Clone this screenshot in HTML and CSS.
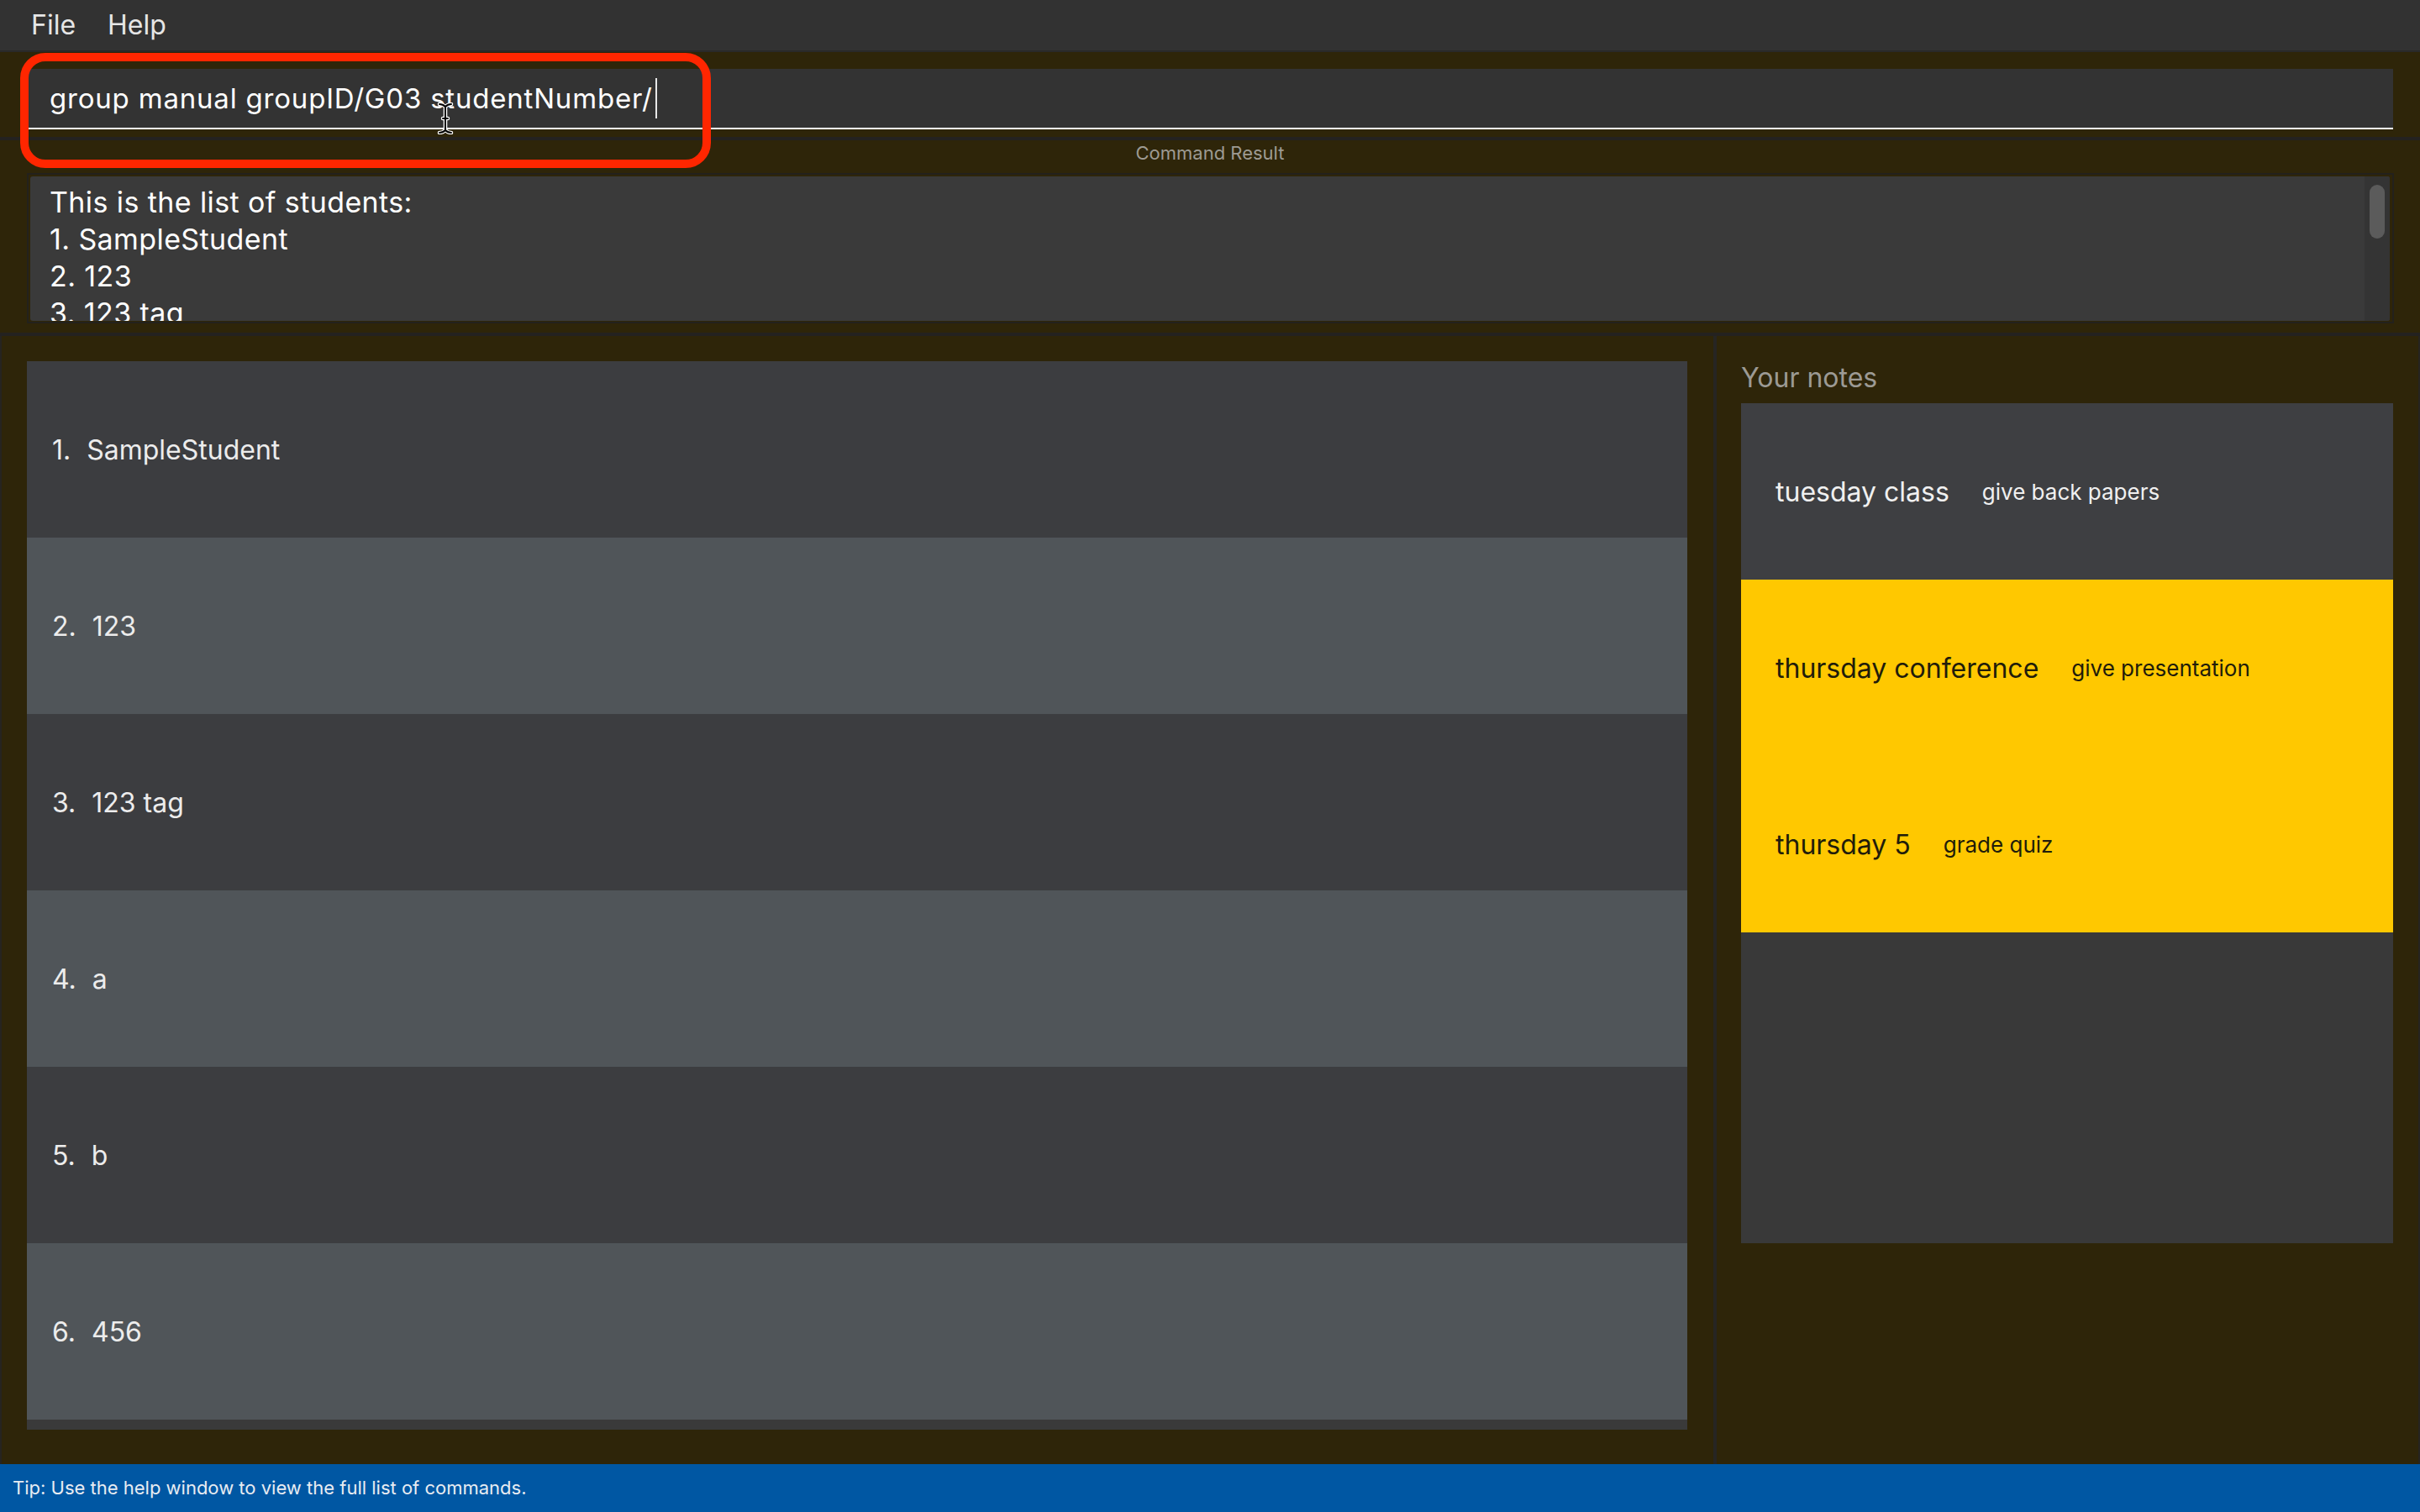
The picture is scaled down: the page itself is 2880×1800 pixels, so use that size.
FILE: index.html
```html
<!DOCTYPE html>
<html lang="en">
<head>
<meta charset="utf-8">
<title>Student manager</title>
<link rel="stylesheet" href="styles.css">
</head>
<body>
<div class="app">
  <div class="menubar">
    <span class="menu-item">File</span>
    <span class="menu-item">Help</span>
  </div>

  <div class="cmd-panel">
    <div class="cmd-field">
      <span class="cmd-text">group manual groupID/G03 studentNumber/</span><span class="caret"></span>
    </div>
  </div>

  <div class="result-panel">
    <div class="result-label">Command Result</div>
    <div class="result-box">
      <div class="result-inner">
        <div class="result-text">
          <div class="result-line">This is the list of students:</div>
          <div class="result-line">1. SampleStudent</div>
          <div class="result-line">2. 123</div>
          <div class="result-line">3. 123 tag</div>
        </div>
        <div class="scroll-track"><div class="scroll-thumb"></div></div>
      </div>
    </div>
  </div>

  <div class="main">
    <div class="list-col">
      <div class="list">
        <div class="row row-dark"><span class="idx">1.</span><span class="name">SampleStudent</span></div>
        <div class="row row-light"><span class="idx">2.</span><span class="name">123</span></div>
        <div class="row row-dark"><span class="idx">3.</span><span class="name">123 tag</span></div>
        <div class="row row-light"><span class="idx">4.</span><span class="name">a</span></div>
        <div class="row row-dark"><span class="idx">5.</span><span class="name">b</span></div>
        <div class="row row-light"><span class="idx">6.</span><span class="name">456</span></div>
      </div>
    </div>
    <div class="divider"></div>
    <div class="notes-col">
      <div class="notes-title">Your notes</div>
      <div class="notes">
        <div class="note note-dark"><span class="note-title">tuesday class</span><span class="note-desc">give back papers</span></div>
        <div class="note note-yellow"><span class="note-title">thursday conference</span><span class="note-desc">give presentation</span></div>
        <div class="note note-yellow"><span class="note-title">thursday 5</span><span class="note-desc">grade quiz</span></div>
      </div>
    </div>
  </div>

  <div class="status">Tip: Use the help window to view the full list of commands.</div>

  <div class="highlight"></div>
  <svg class="ibeam" width="20" height="38" viewBox="0 0 20 38" xmlns="http://www.w3.org/2000/svg">
    <path d="M3 2 Q7 2 10 5 Q13 2 17 2 M10 5 V33 M3 36 Q7 36 10 33 Q13 36 17 36 M7 19 H13" fill="none" stroke="#ffffff" stroke-width="4.5" stroke-linecap="round"/>
    <path d="M3 2 Q7 2 10 5 Q13 2 17 2 M10 5 V33 M3 36 Q7 36 10 33 Q13 36 17 36 M7 19 H13" fill="none" stroke="#000000" stroke-width="2" stroke-linecap="round"/>
  </svg>
</div>
</body>
</html>
```

FILE: styles.css
```css
html, body {
  margin: 0;
  padding: 0;
  width: 2880px;
  height: 1800px;
  overflow: hidden;
  background: #2e2509;
  font-family: Inter, "Noto Sans", "Liberation Sans", sans-serif;
}

.app {
  position: relative;
  width: 2880px;
  height: 1800px;
  display: flex;
  flex-direction: column;
  background: #2e2509;
}

/* menu bar */
.menubar {
  height: 60px;
  background: #323232;
  border-bottom: 2px solid #292929;
  display: flex;
  align-items: center;
  padding-left: 18px;
  flex: none;
}
.menu-item {
  font-size: 32px;
  line-height: 60px;
  color: #e6e6e6;
  padding: 0 19px;
}

/* command box */
.cmd-panel {
  flex: none;
  padding: 20px 32px 9px 34px;
  border-bottom: 4px solid #242220;
}
.cmd-field {
  height: 70px;
  background: #333333;
  border-bottom: 2px solid #ffffff;
  display: flex;
  align-items: center;
  padding-left: 25px;
}
.cmd-text {
  font-size: 33px;
  letter-spacing: 0.8px;
  line-height: 70px;
  color: #ffffff;
  white-space: pre;
}
.caret {
  display: inline-block;
  width: 2px;
  height: 48px;
  margin-left: 3px;
  background: #e8e8e8;
}

/* command result */
.result-panel {
  flex: none;
  height: 229px;
  border-bottom: 4px solid #242220;
  display: flex;
  flex-direction: column;
}
.result-label {
  height: 30px;
  line-height: 30px;
  font-size: 22px;
  color: #9d9a92;
  text-align: center;
  margin-bottom: 9px;
}
.result-box {
  margin: 0 31px 0 32px;
  height: 179px;
  box-sizing: border-box;
  border: 2px solid #23211c;
  padding: 2px 3px 1px 2px;
}
.result-inner {
  height: 100%;
  background: #3a3a3a;
  border-radius: 3px;
  display: flex;
  overflow: hidden;
}
.result-text {
  flex: 1;
  padding: 9px 0 0 23px;
  font-size: 34px;
  letter-spacing: 0.4px;
  color: #ffffff;
  overflow: hidden;
}
.result-line {
  height: 44px;
  line-height: 44px;
  white-space: nowrap;
}
.scroll-track {
  width: 30px;
  background: #343434;
  display: flex;
  justify-content: center;
  padding-top: 10px;
  box-sizing: border-box;
}
.scroll-thumb {
  width: 18px;
  height: 64px;
  border-radius: 9px;
  background: #5b5b5b;
}

/* main area */
.main {
  flex: 1;
  display: flex;
  min-height: 0;
}
.list-col {
  width: 2039px;
  box-sizing: border-box;
  padding: 30px 31px 41px 30px;
  border-left: 2px solid #262420;
  flex: none;
}
.list {
  height: 100%;
  background: #3a3a3a;
  overflow: hidden;
}
.row {
  height: 210px;
  display: flex;
  align-items: center;
  gap: 19px;
  padding-left: 30px;
  font-size: 32px;
  color: #ececec;
}
.row-dark { background: #3c3d40; }
.row-light { background: #505559; }

.divider {
  width: 4px;
  background: #262523;
  flex: none;
}

.notes-col {
  flex: 1;
  padding: 30px 30px 0 29px;
  border-right: 2px solid #262420;
  display: flex;
  flex-direction: column;
}
.notes-title {
  height: 40px;
  line-height: 40px;
  font-size: 32px;
  color: #9c9a94;
  margin-bottom: 10px;
}
.notes {
  height: 1000px;
  background: #393939;
}
.note {
  height: 210px;
  display: flex;
  align-items: center;
  gap: 39px;
  padding-left: 41px;
}
.note-dark { background: #3e3f42; color: #f0f0f0; }
.note-yellow { background: #ffc800; color: #211c0a; }
.note-title { font-size: 32px; }
.note-desc { font-size: 26px; }

/* status bar */
.status {
  flex: none;
  height: 57px;
  line-height: 57px;
  background: #0057a3;
  color: #e8ecf2;
  font-size: 22px;
  padding-left: 15px;
}

/* overlays */
.highlight {
  position: absolute;
  left: 24px;
  top: 63px;
  width: 822px;
  height: 137px;
  box-sizing: border-box;
  border: 10px solid #ff2600;
  border-radius: 30px;
  pointer-events: none;
}
.ibeam {
  position: absolute;
  left: 520px;
  top: 122px;
}
```
